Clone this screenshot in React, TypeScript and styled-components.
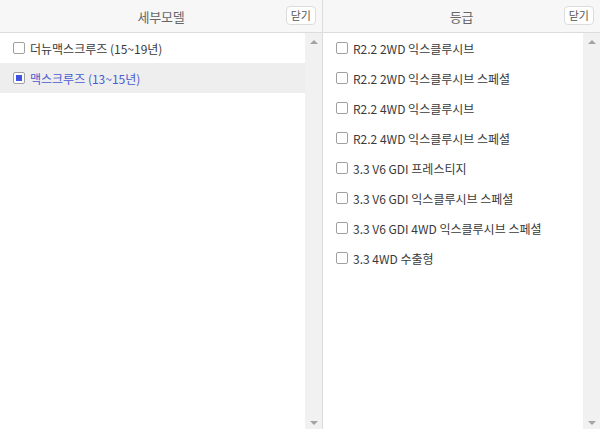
import styled, { createGlobalStyle } from "styled-components";
import { useState } from "react";

const models = [
  { key: "new", label: "더뉴맥스크루즈 (15~19년)" },
  { key: "old", label: "맥스크루즈 (13~15년)" },
];

const grades = [
  "R2.2 2WD 익스클루시브",
  "R2.2 2WD 익스클루시브 스페셜",
  "R2.2 4WD 익스클루시브",
  "R2.2 4WD 익스클루시브 스페셜",
  "3.3 V6 GDI 프레스티지",
  "3.3 V6 GDI 익스클루시브 스페셜",
  "3.3 V6 GDI 4WD 익스클루시브 스페셜",
  "3.3 4WD 수출형",
];

export default function App() {
  const [model, setModel] = useState("old");
  const [checked, setChecked] = useState<string[]>([]);

  const toggle = (g: string) =>
    setChecked((prev) => (prev.includes(g) ? prev.filter((x) => x !== g) : [...prev, g]));

  return (
    <>
      <GlobalStyle />
      <Wrap>
        <Panel width="323px" divider>
          <Header>
            <Title>세부모델</Title>
            <CloseButton>닫기</CloseButton>
          </Header>
          <Body>
            <List>
              {models.map((m) => (
                <Row key={m.key} active={model === m.key} onClick={() => setModel(m.key)}>
                  <Check checked={model === m.key} />
                  <Label active={model === m.key}>{m.label}</Label>
                </Row>
              ))}
            </List>
            <Scrollbar>
              <ArrowUp />
              <ArrowDown />
            </Scrollbar>
          </Body>
        </Panel>
        <Panel width="auto">
          <Header>
            <Title>등급</Title>
            <CloseButton>닫기</CloseButton>
          </Header>
          <Body>
            <List>
              {grades.map((g) => (
                <Row key={g} onClick={() => toggle(g)}>
                  <Check checked={checked.includes(g)} />
                  <Label>{g}</Label>
                </Row>
              ))}
            </List>
            <Scrollbar>
              <ArrowUp />
              <ArrowDown />
            </Scrollbar>
          </Body>
        </Panel>
      </Wrap>
    </>
  );
}

const GlobalStyle = createGlobalStyle`
  html, body, #root {
    margin: 0;
    padding: 0;
    height: 100%;
  }
  body {
    font-family: "Noto Sans CJK KR", "Noto Sans", sans-serif;
    background: #fff;
  }
`;

const Wrap = styled.div`
  display: flex;
  width: 600px;
  height: 429px;
  overflow: hidden;
`;

const Panel = styled.div<{ width: string; divider?: boolean }>`
  display: flex;
  flex-direction: column;
  width: ${({ width }) => width};
  flex: ${({ width }) => (width === "auto" ? "1" : "none")};
  border-right: ${({ divider }) => (divider ? "1px solid #dcdcdc" : "none")};
  box-sizing: border-box;
  height: 100%;
`;

const Header = styled.div`
  position: relative;
  display: flex;
  align-items: center;
  justify-content: center;
  height: 32px;
  background: #f7f7f7;
  border-bottom: 1px solid #dcdcdc;
  flex: none;
`;

const Title = styled.span`
  font-size: 13px;
  color: #666;
  letter-spacing: -0.2px;
`;

const CloseButton = styled.button`
  position: absolute;
  right: 6px;
  top: 6px;
  height: 19px;
  padding: 0 4px;
  border: 1px solid #dcdcdc;
  border-radius: 4px;
  background: #fff;
  font-family: inherit;
  font-size: 11px;
  line-height: 17px;
  color: #555;
  cursor: pointer;
`;

const Body = styled.div`
  flex: 1;
  display: flex;
  min-height: 0;
`;

const List = styled.div`
  flex: 1;
  display: flex;
  flex-direction: column;
  overflow: hidden;
`;

const Row = styled.div<{ active?: boolean }>`
  display: flex;
  align-items: center;
  gap: 5px;
  height: 30px;
  padding-left: 13px;
  background: ${({ active }) => (active ? "#eeeeee" : "transparent")};
  cursor: pointer;
  flex: none;
`;

const Check = styled.span<{ checked?: boolean }>`
  position: relative;
  width: 12px;
  height: 12px;
  box-sizing: border-box;
  border: 1px solid #a0a0a0;
  border-radius: 2px;
  background: #fff;
  flex: none;
  &::after {
    content: "";
    position: absolute;
    left: 2px;
    top: 2px;
    width: 6px;
    height: 6px;
    background: #3f51e0;
    display: ${({ checked }) => (checked ? "block" : "none")};
  }
`;

const Label = styled.span<{ active?: boolean }>`
  font-size: 12px;
  letter-spacing: 0;
  color: ${({ active }) => (active ? "#4a5bd0" : "#3a3a3a")};
  white-space: nowrap;
`;

const Scrollbar = styled.div`
  width: 17px;
  flex: none;
  background: #f1f1f1;
  display: flex;
  flex-direction: column;
  justify-content: space-between;
  align-items: center;
  padding: 7px 0 4px;
  box-sizing: border-box;
`;

const ArrowUp = styled.span`
  width: 0;
  height: 0;
  border-left: 4px solid transparent;
  border-right: 4px solid transparent;
  border-bottom: 4px solid #a3a3a3;
`;

const ArrowDown = styled.span`
  width: 0;
  height: 0;
  border-left: 4px solid transparent;
  border-right: 4px solid transparent;
  border-top: 4px solid #a3a3a3;
`;
